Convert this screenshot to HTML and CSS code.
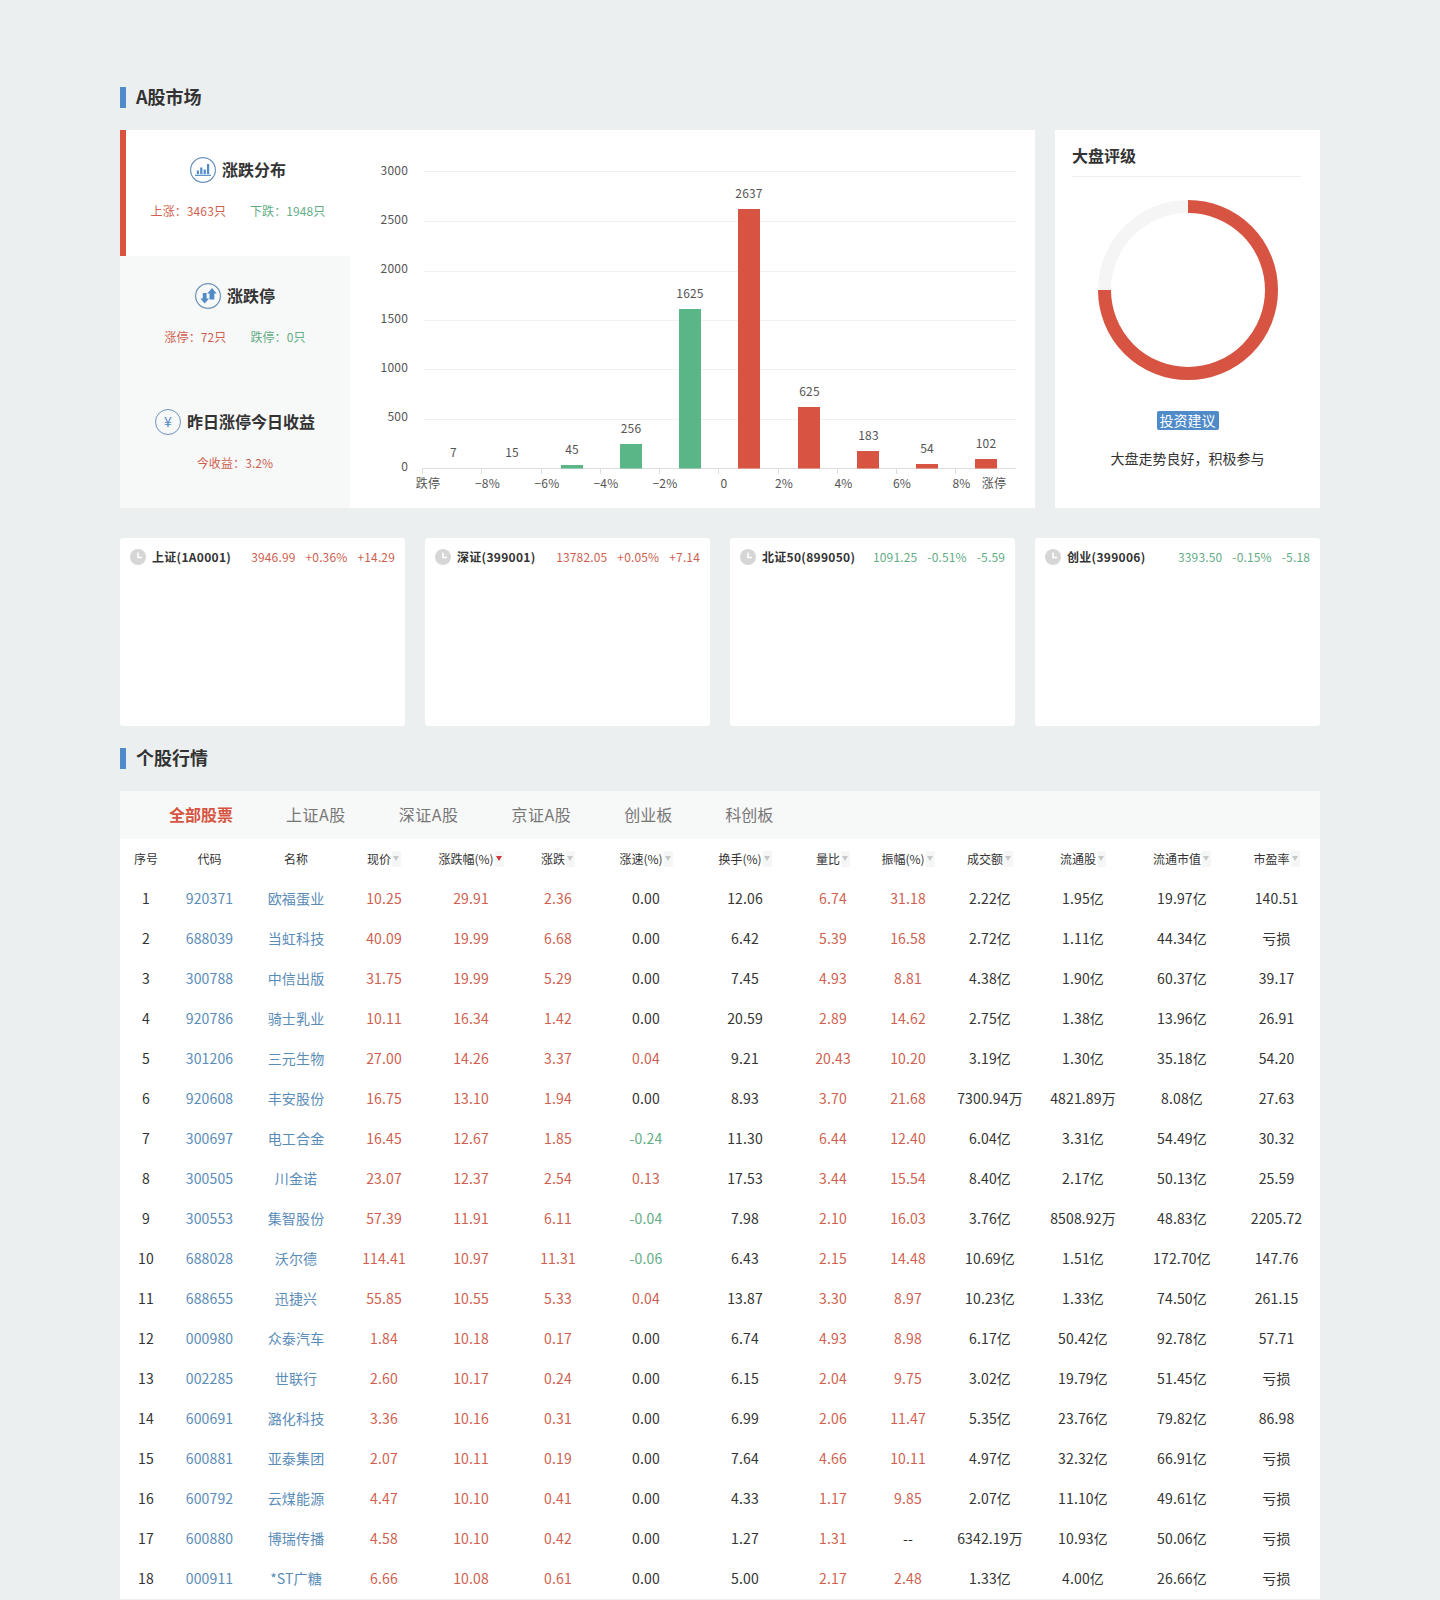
FILE: index.html
```html
<!DOCTYPE html>
<html lang="zh-CN">
<head>
<meta charset="utf-8">
<title>A股市场</title>
<link rel="stylesheet" href="styles.css">
</head>
<body>
<main class="page">
  <h2 class="section-title">A股市场</h2>
  <section class="market-row">
    <div class="dist-panel">
      <div class="side-tabs">
        <div class="side-tab active">
          <div class="tab-head">
            <svg class="tab-icon" viewBox="0 0 26 26"><circle cx="13" cy="13" r="12.4" class="ring"/><path d="M6.800 13.500h2.200v3.400H6.800zM10.200 10.500h2.200v6.400h-2.200zM13.600 12.500h2.200v4.400h-2.200zM17 7h2.200v9.900H17z" class="fill"/><path d="M5 17.700h16v1.200H5z" class="fill"/></svg>
            <span class="tab-label">涨跌分布</span>
          </div>
          <div class="tab-sub"><span class="up">上涨：3463只</span><span class="down">下跌：1948只</span></div>
        </div>
        <div class="side-tab">
          <div class="tab-head">
            <svg class="tab-icon" viewBox="0 0 26 26"><circle cx="13" cy="13" r="12.4" class="ring"/><path d="M7.800 10h3.800v5.600h2.400L9.700 20.500 5.400 15.600h2.400z" class="fill"/><path d="M14.500 16.500v-6h-2.200L17 5l4.700 5.500h-2.400v6z" class="fill"/></svg>
            <span class="tab-label">涨跌停</span>
          </div>
          <div class="tab-sub"><span class="up">涨停：72只</span><span class="down">跌停：0只</span></div>
        </div>
        <div class="side-tab">
          <div class="tab-head">
            <span class="yen-icon">¥</span>
            <span class="tab-label">昨日涨停今日收益</span>
          </div>
          <div class="tab-sub"><span class="up">今收益：3.2%</span></div>
        </div>
      </div>
      <svg class="dist-chart" viewBox="350 130 685 378">
        <g class="grid">
          <path d="M424 171.500H1016M424 221.500H1016M424 271.500H1016M424 320.500H1016M424 369.500H1016M424 419.500H1016"/>
        </g>
        <path class="axis" d="M422 468.500H1016M422.500 468V474M481.500 468V474M541.500 468V474M600.500 468V474M659.500 468V474M718.500 468V474M778.500 468V474M837.500 468V474M896.500 468V474M955.500 468V474"/>
        <g class="y-labels">
          <text x="408" y="175">3000</text><text x="408" y="224">2500</text><text x="408" y="273">2000</text><text x="408" y="323">1500</text><text x="408" y="372">1000</text><text x="408" y="421">500</text><text x="408" y="471">0</text>
        </g>
        <g class="bar-green">
          <rect x="561" y="465" width="22" height="3.500"/><rect x="620" y="444" width="22" height="24.500"/><rect x="679" y="309" width="22" height="159.500"/>
        </g>
        <g class="bar-red">
          <rect x="738" y="209" width="22" height="259.500"/><rect x="798" y="407" width="22" height="61.500"/><rect x="857" y="451" width="22" height="17.500"/><rect x="916" y="464" width="22" height="4.500"/><rect x="975" y="459" width="22" height="9.500"/>
        </g>
        <g class="val-labels">
          <text x="453.500" y="457">7</text><text x="512" y="457">15</text><text x="572" y="454">45</text><text x="631" y="433">256</text><text x="690" y="298">1625</text><text x="749" y="198">2637</text><text x="809.500" y="396">625</text><text x="868.500" y="440">183</text><text x="927" y="453">54</text><text x="986" y="448">102</text>
        </g>
        <g class="x-labels">
          <text x="428" y="488">跌停</text><text x="487.500" y="488">−8%</text><text x="547" y="488">−6%</text><text x="606" y="488">−4%</text><text x="665" y="488">−2%</text><text x="724" y="488">0</text><text x="784" y="488">2%</text><text x="843.500" y="488">4%</text><text x="902" y="488">6%</text><text x="961.500" y="488">8%</text><text x="994" y="488">涨停</text>
        </g>
      </svg>
    </div>
    <aside class="rating-panel">
      <h3 class="rating-title">大盘评级</h3>
      <svg class="donut" viewBox="0 0 180 180">
        <circle cx="90" cy="90" r="83.500" class="donut-bg"/>
        <path d="M90 6.500A83.500 83.500 0 1 1 6.500 90" class="donut-val"/>
      </svg>
      <span class="rating-badge">投资建议</span>
      <p class="rating-text">大盘走势良好，积极参与</p>
    </aside>
  </section>

  <section class="index-row">
    <div class="index-card">
      <div class="index-head">
        <svg class="clock" viewBox="0 0 16 16"><circle cx="8" cy="8" r="8"/><path d="M8 3.500V8.500H12"/></svg>
        <b class="index-name">上证(1A0001)</b>
        <span class="index-vals up"><span>3946.99</span><span>+0.36%</span><span>+14.29</span></span>
      </div>
    </div>
    <div class="index-card">
      <div class="index-head">
        <svg class="clock" viewBox="0 0 16 16"><circle cx="8" cy="8" r="8"/><path d="M8 3.500V8.500H12"/></svg>
        <b class="index-name">深证(399001)</b>
        <span class="index-vals up"><span>13782.05</span><span>+0.05%</span><span>+7.14</span></span>
      </div>
    </div>
    <div class="index-card">
      <div class="index-head">
        <svg class="clock" viewBox="0 0 16 16"><circle cx="8" cy="8" r="8"/><path d="M8 3.500V8.500H12"/></svg>
        <b class="index-name">北证50(899050)</b>
        <span class="index-vals down"><span>1091.25</span><span>-0.51%</span><span>-5.59</span></span>
      </div>
    </div>
    <div class="index-card">
      <div class="index-head">
        <svg class="clock" viewBox="0 0 16 16"><circle cx="8" cy="8" r="8"/><path d="M8 3.500V8.500H12"/></svg>
        <b class="index-name">创业(399006)</b>
        <span class="index-vals down"><span>3393.50</span><span>-0.15%</span><span>-5.18</span></span>
      </div>
    </div>
  </section>

  <h2 class="section-title second">个股行情</h2>
  <section class="stock-panel">
    <nav class="stock-tabs">
      <span class="stock-tab current">全部股票</span>
      <span class="stock-tab latin">上证A股</span>
      <span class="stock-tab latin">深证A股</span>
      <span class="stock-tab latin">京证A股</span>
      <span class="stock-tab">创业板</span>
      <span class="stock-tab">科创板</span>
    </nav>
    <table class="stock-table">
      <colgroup>
        <col class="c1"><col class="c2"><col class="c3"><col class="c4"><col class="c5"><col class="c6"><col class="c7"><col class="c8"><col class="c9"><col class="c10"><col class="c11"><col class="c12"><col class="c13"><col class="c14">
      </colgroup>
      <thead>
        <tr>
          <th>序号</th><th>代码</th><th>名称</th>
          <th>现价<i class="sort"></i></th>
          <th>涨跌幅(%)<i class="sort on"></i></th>
          <th>涨跌<i class="sort"></i></th>
          <th>涨速(%)<i class="sort"></i></th>
          <th>换手(%)<i class="sort"></i></th>
          <th>量比<i class="sort"></i></th>
          <th>振幅(%)<i class="sort"></i></th>
          <th>成交额<i class="sort"></i></th>
          <th>流通股<i class="sort"></i></th>
          <th>流通市值<i class="sort"></i></th>
          <th>市盈率<i class="sort"></i></th>
        </tr>
      </thead>
      <tbody>
        <tr><td>1</td><td class="link">920371</td><td class="link">欧福蛋业</td><td class="up">10.25</td><td class="up">29.91</td><td class="up">2.36</td><td>0.00</td><td>12.06</td><td class="up">6.74</td><td class="up">31.18</td><td>2.22亿</td><td>1.95亿</td><td>19.97亿</td><td>140.51</td></tr>
        <tr><td>2</td><td class="link">688039</td><td class="link">当虹科技</td><td class="up">40.09</td><td class="up">19.99</td><td class="up">6.68</td><td>0.00</td><td>6.42</td><td class="up">5.39</td><td class="up">16.58</td><td>2.72亿</td><td>1.11亿</td><td>44.34亿</td><td>亏损</td></tr>
        <tr><td>3</td><td class="link">300788</td><td class="link">中信出版</td><td class="up">31.75</td><td class="up">19.99</td><td class="up">5.29</td><td>0.00</td><td>7.45</td><td class="up">4.93</td><td class="up">8.81</td><td>4.38亿</td><td>1.90亿</td><td>60.37亿</td><td>39.17</td></tr>
        <tr><td>4</td><td class="link">920786</td><td class="link">骑士乳业</td><td class="up">10.11</td><td class="up">16.34</td><td class="up">1.42</td><td>0.00</td><td>20.59</td><td class="up">2.89</td><td class="up">14.62</td><td>2.75亿</td><td>1.38亿</td><td>13.96亿</td><td>26.91</td></tr>
        <tr><td>5</td><td class="link">301206</td><td class="link">三元生物</td><td class="up">27.00</td><td class="up">14.26</td><td class="up">3.37</td><td class="up">0.04</td><td>9.21</td><td class="up">20.43</td><td class="up">10.20</td><td>3.19亿</td><td>1.30亿</td><td>35.18亿</td><td>54.20</td></tr>
        <tr><td>6</td><td class="link">920608</td><td class="link">丰安股份</td><td class="up">16.75</td><td class="up">13.10</td><td class="up">1.94</td><td>0.00</td><td>8.93</td><td class="up">3.70</td><td class="up">21.68</td><td>7300.94万</td><td>4821.89万</td><td>8.08亿</td><td>27.63</td></tr>
        <tr><td>7</td><td class="link">300697</td><td class="link">电工合金</td><td class="up">16.45</td><td class="up">12.67</td><td class="up">1.85</td><td class="down">-0.24</td><td>11.30</td><td class="up">6.44</td><td class="up">12.40</td><td>6.04亿</td><td>3.31亿</td><td>54.49亿</td><td>30.32</td></tr>
        <tr><td>8</td><td class="link">300505</td><td class="link">川金诺</td><td class="up">23.07</td><td class="up">12.37</td><td class="up">2.54</td><td class="up">0.13</td><td>17.53</td><td class="up">3.44</td><td class="up">15.54</td><td>8.40亿</td><td>2.17亿</td><td>50.13亿</td><td>25.59</td></tr>
        <tr><td>9</td><td class="link">300553</td><td class="link">集智股份</td><td class="up">57.39</td><td class="up">11.91</td><td class="up">6.11</td><td class="down">-0.04</td><td>7.98</td><td class="up">2.10</td><td class="up">16.03</td><td>3.76亿</td><td>8508.92万</td><td>48.83亿</td><td>2205.72</td></tr>
        <tr><td>10</td><td class="link">688028</td><td class="link">沃尔德</td><td class="up">114.41</td><td class="up">10.97</td><td class="up">11.31</td><td class="down">-0.06</td><td>6.43</td><td class="up">2.15</td><td class="up">14.48</td><td>10.69亿</td><td>1.51亿</td><td>172.70亿</td><td>147.76</td></tr>
        <tr><td>11</td><td class="link">688655</td><td class="link">迅捷兴</td><td class="up">55.85</td><td class="up">10.55</td><td class="up">5.33</td><td class="up">0.04</td><td>13.87</td><td class="up">3.30</td><td class="up">8.97</td><td>10.23亿</td><td>1.33亿</td><td>74.50亿</td><td>261.15</td></tr>
        <tr><td>12</td><td class="link">000980</td><td class="link">众泰汽车</td><td class="up">1.84</td><td class="up">10.18</td><td class="up">0.17</td><td>0.00</td><td>6.74</td><td class="up">4.93</td><td class="up">8.98</td><td>6.17亿</td><td>50.42亿</td><td>92.78亿</td><td>57.71</td></tr>
        <tr><td>13</td><td class="link">002285</td><td class="link">世联行</td><td class="up">2.60</td><td class="up">10.17</td><td class="up">0.24</td><td>0.00</td><td>6.15</td><td class="up">2.04</td><td class="up">9.75</td><td>3.02亿</td><td>19.79亿</td><td>51.45亿</td><td>亏损</td></tr>
        <tr><td>14</td><td class="link">600691</td><td class="link">潞化科技</td><td class="up">3.36</td><td class="up">10.16</td><td class="up">0.31</td><td>0.00</td><td>6.99</td><td class="up">2.06</td><td class="up">11.47</td><td>5.35亿</td><td>23.76亿</td><td>79.82亿</td><td>86.98</td></tr>
        <tr><td>15</td><td class="link">600881</td><td class="link">亚泰集团</td><td class="up">2.07</td><td class="up">10.11</td><td class="up">0.19</td><td>0.00</td><td>7.64</td><td class="up">4.66</td><td class="up">10.11</td><td>4.97亿</td><td>32.32亿</td><td>66.91亿</td><td>亏损</td></tr>
        <tr><td>16</td><td class="link">600792</td><td class="link">云煤能源</td><td class="up">4.47</td><td class="up">10.10</td><td class="up">0.41</td><td>0.00</td><td>4.33</td><td class="up">1.17</td><td class="up">9.85</td><td>2.07亿</td><td>11.10亿</td><td>49.61亿</td><td>亏损</td></tr>
        <tr><td>17</td><td class="link">600880</td><td class="link">博瑞传播</td><td class="up">4.58</td><td class="up">10.10</td><td class="up">0.42</td><td>0.00</td><td>1.27</td><td class="up">1.31</td><td>--</td><td>6342.19万</td><td>10.93亿</td><td>50.06亿</td><td>亏损</td></tr>
        <tr><td>18</td><td class="link">000911</td><td class="link">*ST广糖</td><td class="up">6.66</td><td class="up">10.08</td><td class="up">0.61</td><td>0.00</td><td>5.00</td><td class="up">2.17</td><td class="up">2.48</td><td>1.33亿</td><td>4.00亿</td><td>26.66亿</td><td>亏损</td></tr>
      </tbody>
    </table>
  </section>
</main>
</body>
</html>
```

FILE: styles.css
```css
* { box-sizing: border-box; }
html, body { margin: 0; padding: 0; }
body {
  background: #ebeff0;
  color: #333;
  font-family: "Noto Sans CJK SC", "Noto Sans", sans-serif;
  font-size: 14px;
}
.page { width: 1200px; margin: 0 auto; padding-top: 87px; }

.up { color: #cf5f50; }
.down { color: #62ad85; }

.section-title {
  margin: 0 0 22px;
  height: 21px;
  line-height: 19px;
  padding-left: 10px;
  border-left: 6px solid #4f8ac9;
  font-size: 18px;
  font-weight: 700;
  color: #333;
}
.section-title.second { margin-top: 22px; }

.market-row { display: flex; gap: 20px; height: 378px; }
.dist-panel { width: 915px; background: #fff; display: flex; }
.side-tabs { width: 230px; flex: none; background: #f7f8f8; }
.side-tab { height: 126px; padding-top: 27px; text-align: center; }
.side-tab.active { background: #fff; border-left: 6px solid #d9533f; }
.tab-head {
  display: flex; align-items: center; justify-content: center; gap: 6px;
  height: 26px; font-size: 16px; font-weight: 700; color: #333;
}
.tab-label { padding-bottom: 2px; }
.tab-icon { width: 26px; height: 26px; flex: none; }
.ring { fill: none; stroke: #6b94ba; stroke-width: 1.2; }
.fill { fill: #4f8ac9; }
.yen-icon {
  width: 26px; height: 26px; flex: none; border: 1px solid #6b94ba; border-radius: 50%;
  color: #4f8ac9; font-size: 14px; font-weight: 400; line-height: 23px; text-align: center;
}
.tab-sub {
  display: flex; justify-content: center; gap: 24px;
  margin-top: 19px; height: 18px; line-height: 18px; font-size: 12px; letter-spacing: .1px;
}

.dist-chart { width: 685px; height: 378px; display: block; }
.grid path { stroke: #f0f1f1; stroke-width: 1; fill: none; }
.axis { stroke: #dddddd; stroke-width: 1; fill: none; }
.dist-chart text { font-size: 12px; fill: #555; letter-spacing: .2px; }
.y-labels text { text-anchor: end; }
.val-labels text, .x-labels text { text-anchor: middle; }
.bar-green rect { fill: #5ab686; }
.bar-red rect { fill: #d75442; }

.rating-panel { width: 265px; background: #fff; padding: 13px 17px 0; text-align: center; }
.rating-title {
  margin: 0 2px 0 0; height: 34px; line-height: 24px;
  border-bottom: 1px solid #eeeeee; text-align: left;
  font-size: 16px; font-weight: 700; color: #333;
}
.donut { display: block; width: 180px; height: 180px; margin: 23px auto 0; }
.donut-bg { fill: none; stroke: #f5f5f5; stroke-width: 13; }
.donut-val { fill: none; stroke: #d75442; stroke-width: 13; }
.rating-badge {
  display: block; width: 62px; height: 19px; line-height: 19px; margin: 31px auto 0;
  background: #4f8ac9; color: #fff; font-size: 14px; border-radius: 2px;
}
.rating-text { margin: 17px 0 0; line-height: 22px; font-size: 14px; color: #333; }

.index-row { display: flex; gap: 20px; margin-top: 30px; }
.index-card { width: 285px; height: 188px; background: #fff; border-radius: 3px; padding: 11px 10px 0; }
.index-head { display: flex; align-items: center; height: 16px; font-size: 12px; }
.clock { width: 16px; height: 16px; flex: none; margin-right: 6px; }
.clock circle { fill: #d6d6d6; }
.clock path { stroke: #fff; stroke-width: 1.6; fill: none; }
.index-name { font-weight: 700; color: #333; letter-spacing: .3px; padding-bottom: 2px; }
.index-vals { margin-left: auto; display: flex; gap: 10px; letter-spacing: .15px; padding-bottom: 2px; }

.stock-panel { background: #fff; }
.stock-tabs { display: flex; gap: 53px; height: 48px; align-items: center; padding: 0 0 2px 49px; background: #f7f8f8; }
.stock-tab { font-size: 16px; color: #777; }
.stock-tab.latin { letter-spacing: .5px; }
.stock-tab.current { color: #d75442; font-weight: 700; }
.stock-table { width: 1200px; border-collapse: collapse; table-layout: fixed; }
.c1 { width: 52px; } .c2 { width: 75px; } .c3 { width: 98px; } .c4 { width: 78px; }
.c5 { width: 96px; } .c6 { width: 78px; } .c7 { width: 98px; } .c8 { width: 100px; }
.c9 { width: 76px; } .c10 { width: 74px; } .c11 { width: 90px; } .c12 { width: 96px; }
.c13 { width: 102px; } .c14 { width: 87px; }
.stock-table th, .stock-table td { height: 40px; padding: 0 0 2px; text-align: center; white-space: nowrap; }
.stock-table th { font-size: 12px; font-weight: 400; color: #333; }
.stock-table td { font-size: 14px; color: #333; letter-spacing: .15px; }
.stock-table td.link { color: #5a8cb8; }
.stock-table td.up { color: #cf5f50; }
.stock-table td.down { color: #62ad85; }
.sort {
  display: inline-block; position: relative; width: 9px; height: 16px; margin-left: 1px;
  vertical-align: -3px; background: #f5f6f6;
}
.sort::after {
  content: ""; position: absolute; left: 1px; top: 5px;
  border: 3.5px solid transparent; border-top: 5px solid #c8c8c8; border-bottom: 0;
}
.sort.on::after { border-top-color: #d0393a; }
```
